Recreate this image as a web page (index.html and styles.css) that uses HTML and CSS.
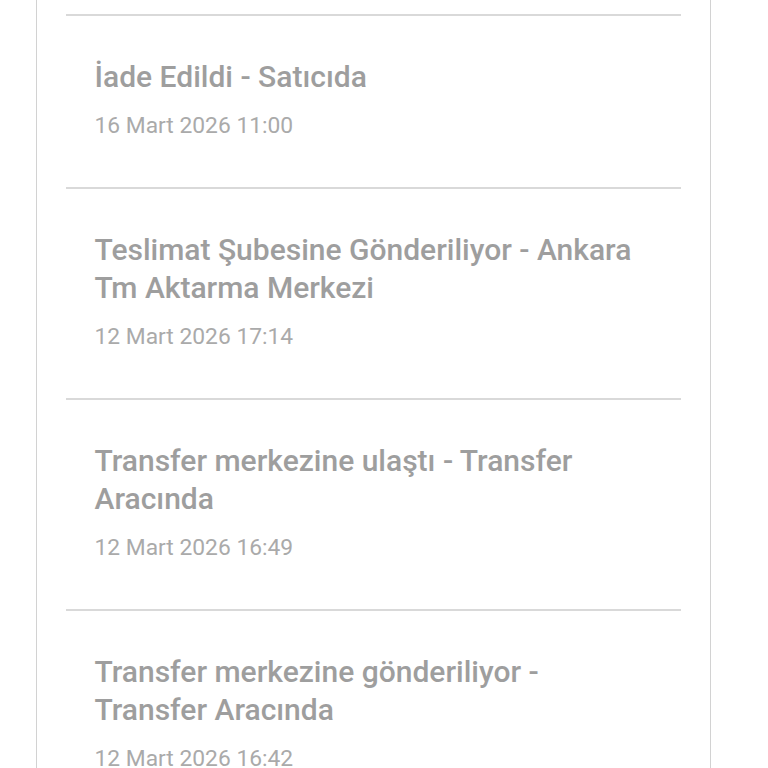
FILE: index.html
```html
<!DOCTYPE html>
<html lang="tr">
<head>
<meta charset="utf-8">
<title>Kargo Hareketleri</title>
<link rel="stylesheet" href="styles.css">
</head>
<body>
<div class="card">
  <ul class="timeline">
    <li class="event">
      <div class="event-title">İade Edildi - Satıcıda</div>
      <div class="event-date">16 Mart 2026 11:00</div>
    </li>
    <li class="event">
      <div class="event-title">Teslimat Şubesine Gönderiliyor - Ankara Tm Aktarma Merkezi</div>
      <div class="event-date">12 Mart 2026 17:14</div>
    </li>
    <li class="event">
      <div class="event-title">Transfer merkezine ulaştı - Transfer Aracında</div>
      <div class="event-date">12 Mart 2026 16:49</div>
    </li>
    <li class="event">
      <div class="event-title">Transfer merkezine gönderiliyor - Transfer Aracında</div>
      <div class="event-date">12 Mart 2026 16:42</div>
    </li>
  </ul>
</div>
</body>
</html>
```
FILE: styles.css
```css
html, body {
  margin: 0;
  padding: 0;
  background: #ffffff;
  height: 768px;
  overflow: hidden;
}

body {
  font-family: Roboto, "Noto Sans", sans-serif;
}

.card {
  box-sizing: border-box;
  margin-left: 36px;
  width: 675px;
  min-height: 768px;
  border-left: 1.5px solid #d2d2d2;
  border-right: 1.5px solid #d2d2d2;
  padding: 14px 29px 0 28.5px;
}

.timeline {
  list-style: none;
  margin: 0;
  padding: 0;
}

.event {
  border-top: 2px solid #d9d9d9;
  padding: 42px 30px 46px 29px;
}

.event-title {
  font-size: 30px;
  font-weight: 500;
  line-height: 38px;
  color: #9e9e9e;
}

.event-date {
  margin-top: 15px;
  font-size: 22.8px;
  line-height: 30px;
  color: #aaaaaa;
}
```
